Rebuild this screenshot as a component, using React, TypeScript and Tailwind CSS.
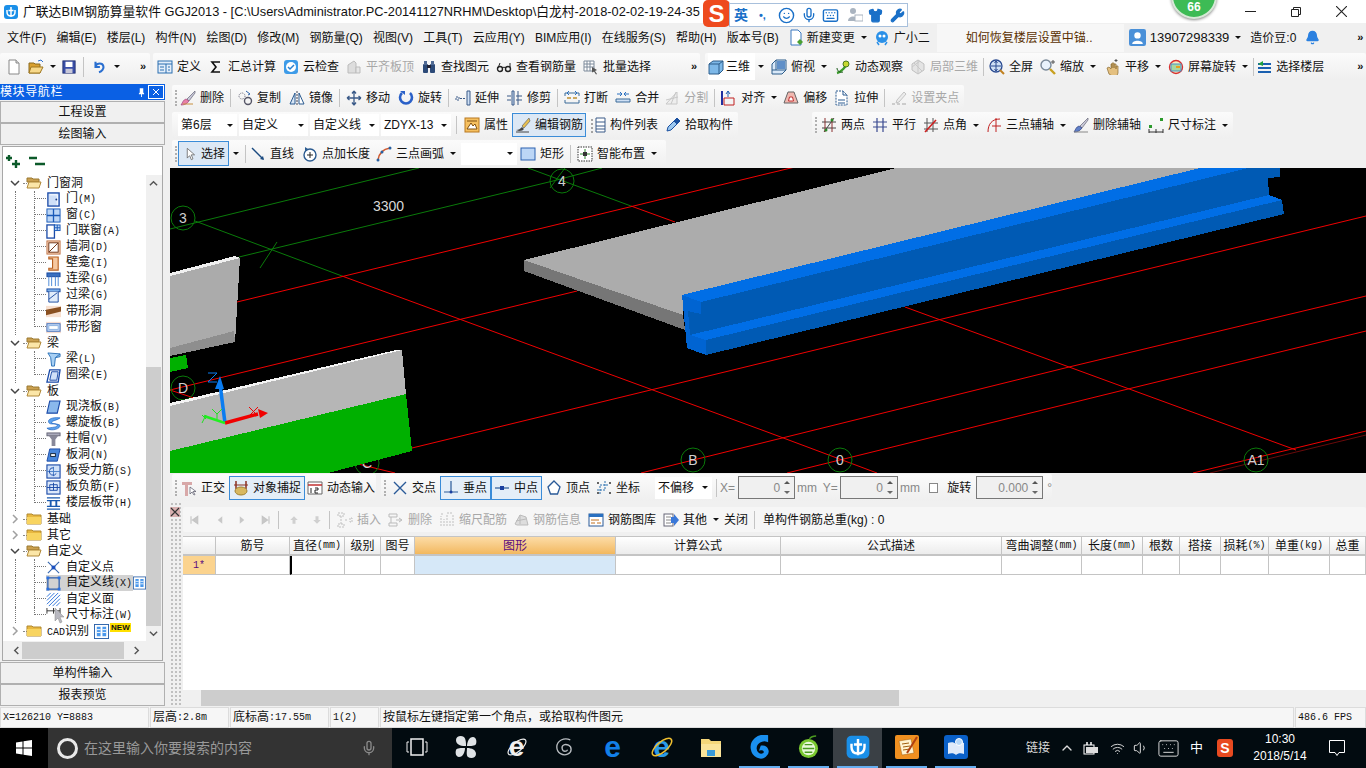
import type { ReactNode } from "react";
import { Bell, ChevronUp, Keyboard, Mic, Shirt, Smile, Volume1, Wifi, Wrench } from "lucide-react";
import clsx from "clsx";

const I: Record<string, ReactNode> = {
  logo: <><rect x="1" y="1" width="14" height="14" rx="3" fill="#1a8fe8" /><path d="M8 3v10M4 6v2c0 3 1.500 4 4 4s4-1 4-4V6M5.500 6.500h5" stroke="#fff" strokeWidth="1.500" fill="none" /></>,
  new: <><path d="M3 1h7l3 3v11H3z" fill="#fff" stroke="#888" /><path d="M10 1v3h3" fill="#ddd" stroke="#888" /></>,
  open: <><path d="M1 4h5l1 1h5v9H1z" fill="#d8a030" stroke="#8a6a20" /><path d="M3 8h12l-3 6H1z" fill="#f6d88a" stroke="#a07820" /><path d="M10 2l3-1 2 2" stroke="#2a6fd0" fill="none" /></>,
  save: <><rect x="1" y="1" width="14" height="14" fill="#3a4fa8" stroke="#223070" /><rect x="4" y="2" width="8" height="6" fill="#fff" /><rect x="4" y="10" width="8" height="5" fill="#c8c8d8" /></>,
  undo: <path d="M4 2v6h5M4 7c2-4 8-4 9 0 1 3-2 6-5 7" stroke="#2a6fd0" strokeWidth="2.400" fill="none" />,
  define: <><rect x="1" y="2" width="14" height="12" fill="#e4eefa" stroke="#2a6fb0" /><path d="M1 5h14M9 5v9M3 8h4M3 11h4M11 8h2M11 11h2" stroke="#2a6fb0" /></>,
  sigma: <path d="M12 3H4l4 5-4 5h8" stroke="#111" strokeWidth="1.600" fill="none" />,
  cloud: <><rect x="1" y="1" width="14" height="14" rx="3" fill="#3d9be8" /><circle cx="8" cy="8" r="5" fill="#fff" /><path d="M5 8l2 2 4-4" stroke="#2a80d0" strokeWidth="1.500" fill="none" /></>,
  flat: <><path d="M2 14V6l6-4 2 2v10z" fill="#ddd" stroke="#bbb" /><path d="M10 8h4v6h-4z" fill="#e6e6e6" stroke="#bbb" /></>,
  binoc: <><rect x="2" y="5" width="5" height="9" rx="1" fill="#2c4a78" /><rect x="9" y="5" width="5" height="9" rx="1" fill="#2c4a78" /><rect x="3" y="2" width="3" height="4" fill="#506a94" /><rect x="10" y="2" width="3" height="4" fill="#506a94" /><rect x="6" y="6" width="4" height="3" fill="#223" /></>,
  glasses: <><circle cx="4" cy="10" r="2.500" fill="none" stroke="#222" strokeWidth="1.400" /><circle cx="12" cy="10" r="2.500" fill="none" stroke="#222" strokeWidth="1.400" /><path d="M6 9c1-1 3-1 4 0M2 9l2-5M14 8V4" stroke="#222" fill="none" /></>,
  batch: <><path d="M1 2h10v10H1zM1 5h10M1 8h10M4 2v10M7 2v10" stroke="#7d8a9a" fill="#fff" /><path d="M9 8l5 3-2 1 2 3-1 .5-2-3-2 1z" fill="#555" /></>,
  cube: <><path d="M1 5l4-3h10v9l-4 4H1z" fill="#7db8e8" stroke="#2c5d8a" /><path d="M1 5h10v10M11 5l4-3" stroke="#2c5d8a" fill="none" /></>,
  cubeTop: <><path d="M1 5l4-4h10v10l-4 4H1z" fill="#d8e8f8" stroke="#2c5d8a" /><path d="M5 1v10H1M5 11h10M5 1l-4 4" stroke="#2c5d8a" fill="none" /><path d="M6 2h8v8H6z" fill="#5f8fc8" /></>,
  orbit: <><path d="M2 14c4-1 9-6 11-11" stroke="#3a9a2a" strokeWidth="2.400" fill="none" /><circle cx="11" cy="5" r="3" fill="#c8d830" stroke="#4a7a20" /><path d="M2 9c0 3 3 5 6 4" stroke="#1a5a1a" fill="none" /></>,
  cubeGray: <><path d="M8 1l6 4v6l-6 4-6-4V5z" fill="#e4e4e4" stroke="#c0c0c0" /><path d="M4 4l8 8M8 1v14M2 8l8-6" stroke="#c8c8c8" /></>,
  full: <><circle cx="7" cy="7" r="6" fill="#cfe0f5" stroke="#2a4a90" strokeWidth="1.300" /><path d="M7 2v10M2 7h10M7 2L5.500 4M7 2l1.500 2M7 12l-1.500-2M7 12l1.500-2" stroke="#2a4a90" fill="none" /><path d="M11 11l4 4" stroke="#c08020" strokeWidth="2" /></>,
  mag: <><circle cx="6" cy="6" r="5" fill="#e8f2fc" stroke="#7a8a9a" strokeWidth="1.400" /><path d="M10 10l5 5" stroke="#c8a020" strokeWidth="2.400" /><path d="M13 1v4M11 3h4" stroke="#555" /></>,
  hand: <><path d="M4 15L2 9l2-1 2 2V5h1v4-5h2v5-4h2v5-3h2v7l-2 5z" fill="#e4c080" stroke="#8a6a30" strokeWidth=".7" /><path d="M11 0v3M9.500 1.500h3" stroke="#555" /></>,
  spin: <><circle cx="8" cy="8" r="6.500" fill="#f8f0c0" stroke="#d83030" strokeWidth="1.400" /><rect x="3" y="5" width="10" height="7" fill="#a8d8a0" stroke="#4a90c8" /><path d="M8 8h4" stroke="#e8a020" strokeWidth="2" /></>,
  floors: <><path d="M2 5h13M2 9h13M2 13h13" stroke="#1a60b0" strokeWidth="1.800" /><path d="M7 2L2 5l5 2z" fill="#20a040" /></>,
  brush: <><path d="M15 1L7 9l2 2 6-8z" fill="#c8c8d8" stroke="#667" strokeWidth=".7" /><path d="M6 9c-3 1-3 3-5 6 3 0 6-1 8-4z" fill="#e880a8" stroke="#a04880" strokeWidth=".7" /><path d="M3 14h10" stroke="#c89040" /></>,
  copy: <><circle cx="5" cy="6" r="3" fill="none" stroke="#667" strokeDasharray="1 1" /><circle cx="11" cy="11" r="3.500" fill="none" stroke="#556" strokeWidth="1.400" /><path d="M9 1l4 3-2 1" stroke="#2a60a8" fill="none" /></>,
  mirror: <><path d="M8 1v14" stroke="#445" strokeDasharray="2 1" /><path d="M6 3v11H1z" fill="#d8e6f6" stroke="#2a5a90" /><path d="M10 3v11h5z" fill="#fff" stroke="#2a5a90" /></>,
  move: <path d="M8 1v14M1 8h14M8 1L6 3.500M8 1l2 2.500M8 15l-2-2.500M8 15l2-2.500M1 8l2.500-2M1 8l2.500 2M15 8l-2.500-2M15 8l-2.500 2" stroke="#3a5a88" strokeWidth="1.300" fill="none" />,
  rotate: <><path d="M4 3a6 6 0 1 0 8 0" stroke="#2a60c8" strokeWidth="2.600" fill="none" /><path d="M2 1h5v4z" fill="#2a60c8" /></>,
  extend: <><path d="M1 7h3v3H1zM5 8.500h5" stroke="#3a5a88" fill="none" strokeDasharray="2 1" /><path d="M12 1h3v14h-3z" fill="#cfe0f5" stroke="#3a5a88" /></>,
  trim: <><path d="M5 1h2v14H5z" fill="#cfe0f5" stroke="#3a5a88" /><path d="M0 6h4M0 10h4M9 6h6M9 10h6M11 1v14" stroke="#3a5a88" fill="none" /></>,
  break: <><path d="M1 6V3h14v3M1 10v3h14v-3" stroke="#3a6a98" fill="none" /><path d="M7 8H3M9 8h4" stroke="#c09030" strokeWidth="1.400" /><path d="M5 1l-2 2 2 2M11 1l2 2-2 2" stroke="#2a70c0" fill="none" /></>,
  merge: <><path d="M1 12V9h14v3z" fill="#cfe0f5" stroke="#3a6a98" /><path d="M2 4h4M14 4h-4M5 2l2 2-2 2M11 2L9 4l2 2" stroke="#2a70c0" fill="none" /></>,
  split: <><path d="M2 14L13 2v12z" fill="#eee" stroke="#c8c8c8" /><path d="M2 10l12-3M7 14l5-12" stroke="#c8c8c8" /></>,
  align: <><path d="M1 1v14" stroke="#2030a0" strokeWidth="2" /><path d="M3 8h10v7H3z" fill="none" stroke="#c02020" /><path d="M7 1v6M5 4l2-3 2 3" stroke="#2060b0" fill="none" /></>,
  offset: <><path d="M5 2h6l4 11H1z" fill="#f0b8b0" stroke="#666" /><path d="M6.500 7h3l1 4h-5z" fill="#fff" stroke="#c03030" /></>,
  stretch: <><path d="M2 1h7l4 4v10H2z" fill="#fff" stroke="#2a5a90" strokeDasharray="2 1" /><path d="M9 1v4h4M4 10h7M4 13h7" stroke="#2a5a90" fill="none" /></>,
  grip: <><path d="M1 14h3M6 14h3M11 14h4" stroke="#c0c0c0" strokeWidth="1.500" /><path d="M13 2L6 10l-1 3 3-1 7-8z" fill="#ececec" stroke="#c4c4c4" /></>,
  prop: <><rect x="1" y="1" width="14" height="14" fill="#f6c060" stroke="#b87820" /><path d="M3 12l4-6 2 3 2-2 2 5zM3 4h10" stroke="#805010" fill="#fff" /></>,
  edit: <><path d="M14 1L7 9l2 2 6-7z" fill="#e8c050" stroke="#666" strokeWidth=".7" /><path d="M1 13c3 0 4-1 6-3l2 2c-1 1-2 2-5 2z" fill="#444" /><path d="M1 15h13" stroke="#444" /></>,
  list: <><path d="M1 3h2M1 7h2M1 11h2M1 15h2" stroke="#555" /><path d="M6 1h9v14H6z" fill="#fff" stroke="#3a5a88" /><path d="M6 5h9M6 9h9M6 12h9" stroke="#3a5a88" /></>,
  pick: <><path d="M2 14l1-4 6-6 3 3-6 6z" fill="#9cc8f0" stroke="#1a50a0" /><path d="M9 4l3-3 3 3-3 3" fill="#1a50a0" stroke="#1a50a0" /></>,
  two: <><path d="M3 15L13 1M1 5h14M1 11h14" stroke="#444" /><path d="M4 1v14M11 1v14" stroke="#8a3030" /><circle cx="5" cy="13" r="1.500" fill="#2a8a2a" /><circle cx="11" cy="3" r="1.500" fill="#2a8a2a" /></>,
  para: <path d="M5 1v14M11 1v14M1 5h14M1 10h14" stroke="#3a4a90" strokeWidth="1.200" />,
  angle: <><path d="M4 1v14M10 1v14M1 6h14M1 12h14" stroke="#555" /><path d="M2 15L13 3" stroke="#d02020" strokeWidth="1.600" /></>,
  arc3: <path d="M2 15C2 7 6 2 14 2M10 1v14M6 9h9" stroke="#c02020" fill="none" />,
  delAux: <><path d="M15 1L7 9l2 2 6-8z" fill="#c8c8d8" stroke="#667" strokeWidth=".7" /><path d="M6 9c-3 1-3 3-5 6 3 0 6-1 8-4z" fill="#6080c8" stroke="#304080" strokeWidth=".7" /><path d="M1 15h14" stroke="#888" /></>,
  dim: <><path d="M1 15h14M1 12v4M15 12v4M8 12v4" stroke="#333" /><rect x="1" y="8" width="3" height="3" fill="#2a9a2a" /><rect x="12" y="1" width="3" height="3" fill="#2a9a2a" /></>,
  cursor: <path d="M4 1v12l3-3 2 5 2-1-2-5h4z" fill="#fff" stroke="#666" />,
  line: <><path d="M2 2l11 11" stroke="#1a4a80" strokeWidth="1.400" /><path d="M14 14l-1-4-3 3z" fill="#1a4a80" /></>,
  plen: <><circle cx="8" cy="9" r="6" fill="#fff" stroke="#2a5a90" strokeWidth="1.400" /><path d="M8 6v6M5 9h6" stroke="#222" /><path d="M3 1l3 2-3 2z" fill="#2a5a90" /></>,
  arc: <><path d="M2 14C3 7 7 3 14 2" stroke="#d05a30" strokeWidth="1.600" fill="none" /><circle cx="2" cy="14" r="1.500" fill="#2a60a0" /><circle cx="14" cy="2" r="1.500" fill="#2a60a0" /><circle cx="6" cy="6" r="1.500" fill="#2a60a0" /></>,
  rect: <rect x="1" y="2" width="14" height="12" fill="#bcd6f6" stroke="#2a60b0" />,
  smart: <><rect x="1" y="1" width="14" height="14" fill="#fff" stroke="#333" strokeDasharray="1.500 1" /><path d="M8 3v10M3 8h10" stroke="#2a8a2a" /><rect x="6" y="6" width="4" height="4" fill="#333" /></>,
  ortho: <><path d="M1 2h10v3H7v11H4V5H1z" fill="#d8a8a8" /><path d="M9 7v7l2-2 2 3 1-.5-2-3h3z" fill="#fff" stroke="#556" strokeWidth=".7" /></>,
  snap: <><path d="M3 1v8M13 1v8" stroke="#8a3020" strokeWidth="1.500" /><path d="M1 5h14" stroke="#8a3020" /><ellipse cx="8" cy="11" rx="6" ry="4" fill="#d8b860" stroke="#a08030" /></>,
  dyn: <><path d="M1 2h14v12H1z" fill="#fff" stroke="#666" /><path d="M1 5h14" stroke="#c03030" strokeWidth="1.500" /><path d="M4 8v5M8 8h3v2H8v3h3" stroke="#222" fill="none" /></>,
  cross: <path d="M2 2l12 12M14 2L2 14" stroke="#2a5a98" strokeWidth="1.400" />,
  perp: <><path d="M1 12h14M8 1v11" stroke="#2a5a98" strokeWidth="1.200" /><circle cx="8" cy="12" r="1.500" fill="#1a40a0" /></>,
  mid: <><path d="M1 8h14" stroke="#2a5a98" strokeWidth="1.200" /><rect x="6" y="6" width="4" height="4" fill="#1a40a0" /></>,
  vertex: <path d="M8 1l6 6-2.500 7h-7L2 7z" fill="#fff" stroke="#2a5a98" strokeWidth="1.300" />,
  coord: <><path d="M4 14V5h9M9 1v9H1" stroke="#2a70b0" fill="none" strokeDasharray="2 1" /><circle cx="2" cy="3" r="1" fill="#333" /><circle cx="14" cy="3" r="1" fill="#333" /><circle cx="2" cy="13" r="1" fill="#333" /><circle cx="14" cy="13" r="1" fill="#333" /></>,
  first: <path d="M4 3v10M13 3v10L6 8z" stroke="#c4c4c4" fill="#c8c8c8" strokeWidth="1.500" />,
  prev: <path d="M11 3v10L5 8z" fill="#c8c8c8" />,
  next: <path d="M5 3v10l6-5z" fill="#c8c8c8" />,
  last: <path d="M12 3v10M3 3v10l7-5z" stroke="#c4c4c4" fill="#c8c8c8" strokeWidth="1.500" />,
  up: <path d="M8 3l5 5h-3v5H6V8H3z" fill="#d0d0d0" />,
  down: <path d="M8 13l5-5h-3V3H6v5H3z" fill="#d0d0d0" />,
  ins: <path d="M1 1h6v3H1zM1 12h6v3H1zM4 4v8M8 8h3M13 6v4h2V6z" stroke="#c0c0c0" fill="none" strokeDasharray="2 1" />,
  del: <path d="M1 2h8v3H1zM1 11h8v3H1zM3 5v6M8 8h5M11 6l3 2-3 2" stroke="#bbb" fill="none" />,
  scale: <path d="M2 14V4M5 14V7M8 14V3M11 14V8M14 14V2M2 2h3M8 1h6" stroke="#c0c0c0" strokeDasharray="2 1" />,
  info: <><path d="M2 12l5-9 6 2 2 8H4z" fill="#ddd" stroke="#bbb" /><path d="M7 3v9M3 9l10-2" stroke="#bbb" /></>,
  lib: <><rect x="1" y="2" width="14" height="12" fill="#fff" stroke="#2a5a98" /><rect x="1" y="2" width="14" height="3" fill="#2a70c0" /><path d="M3 8h8M3 11h4M9 11h4" stroke="#c07020" /></>,
  other: <><rect x="1" y="2" width="9" height="12" fill="#fff" stroke="#667" /><path d="M3 5h5M3 8h5M3 11h5" stroke="#888" /><path d="M8 5h3V2l5 6-5 6v-3H8z" fill="#3a78d8" /></>,
  door: <><rect x="2" y="1" width="12" height="14" fill="#cfe0f8" stroke="#1a4aa8" strokeWidth="1.400" /><path d="M4 3h8v11" fill="none" stroke="#fff" /><circle cx="11" cy="8" r="1" fill="#1a3a80" /></>,
  win: <><rect x="1" y="1" width="14" height="14" fill="#bcd6f6" stroke="#1a5ab8" /><path d="M8 1v14M1 8h14" stroke="#1a5ab8" strokeWidth="1.400" /></>,
  doorwin: <><rect x="1" y="1" width="8" height="14" fill="#fff" stroke="#1a4aa8" strokeWidth="1.400" /><rect x="9" y="1" width="6" height="6" fill="#bcd6f6" stroke="#1a5ab8" /><path d="M12 1v6M9 4h6" stroke="#1a5ab8" /></>,
  hole: <><rect x="1" y="1" width="14" height="14" fill="#f6d8c0" stroke="#c07040" /><rect x="3" y="3" width="10" height="10" fill="#fff" stroke="#703010" /><path d="M3 13L13 3" stroke="#703010" /></>,
  niche: <path d="M3 1h10v14H3v-2h4V3H3z" fill="#f6c8a0" stroke="#b86020" strokeWidth="1.200" />,
  link: <><rect x="1" y="1" width="14" height="4" fill="#3a70c0" stroke="#1a4aa0" /><path d="M3 5v10M6 5v10M10 5v10M13 5v10" stroke="#4a88d8" /></>,
  lintel: <><rect x="1" y="1" width="14" height="3" fill="#7ab0ec" stroke="#1a4aa0" /><path d="M3 4v11h10V4" fill="#e0ecfa" stroke="#1a4aa0" /><path d="M3 12l9-7" stroke="#1a4aa0" /></>,
  bhole: <><rect x="0" y="2" width="16" height="12" fill="#f8e0d0" /><path d="M0 6l16-3v5L0 12z" fill="#8a5020" /></>,
  bwin: <><rect x="0" y="2" width="16" height="12" fill="#f6dcd0" /><rect x="1" y="4" width="14" height="8" fill="#d0e0f8" stroke="#3a70c0" /><rect x="3" y="6" width="10" height="4" fill="#fff" stroke="#8ab0e0" /></>,
  beam: <><path d="M2 1l13 1v3l-5 1-1 9H6L5 6z" fill="#a8d0f4" stroke="#2a70b8" /><path d="M10 6l5-4" stroke="#2a70b8" /></>,
  ring: <><path d="M4 2h11l-2 13H1z" fill="#fff" stroke="#1a4aa8" strokeWidth="1.400" /><path d="M6 4h7l-1.500 9H4z" fill="#d0e0f8" stroke="#1a4aa8" /></>,
  cast: <path d="M4 1h11l-3 13H1z" fill="#8ab8ec" stroke="#1a4aa8" strokeWidth="1.200" />,
  spiral: <path d="M15 2C8 1 1 3 3 7c1 3 9 0 9 3 0 2-5 2-11 3 3 3 12 2 14-2 1-3-8-2-9-4 0-2 5-2 9-5z" fill="#5aa0ec" stroke="#1a60c0" strokeWidth=".7" />,
  capital: <><rect x="1" y="1" width="14" height="3" fill="#aab" stroke="#667" /><path d="M3 4h10l-3 4H6zM6 8h4v7H6z" fill="#889" /></>,
  shole: <><path d="M4 1h11l-3 13H1z" fill="#4a88dc" stroke="#1a4aa8" /><rect x="5" y="6" width="5" height="3" fill="#fff" stroke="#123" /></>,
  srebar: <><rect x="1" y="1" width="14" height="14" fill="#cfe0f8" stroke="#1a4aa8" strokeWidth="1.200" /><path d="M1 8h14M8 3v10" stroke="#4a80c8" /><path d="M8 4a4 4 0 1 0 3 6" stroke="#1a4aa8" fill="none" /></>,
  nrebar: <><rect x="1" y="1" width="14" height="14" fill="#dce8fa" stroke="#1a4aa8" strokeWidth="1.200" /><path d="M1 8h14M8 3v8M4 5h8v6H4z" stroke="#1a4aa8" fill="none" /></>,
  band: <><path d="M1 2h14M1 14h14M1 5h14M1 11h14" stroke="#1a5ab0" strokeWidth="1.300" /><path d="M5 5v6M11 5v6" stroke="#1a5ab0" strokeWidth="2" /></>,
  cp: <><path d="M2 2l12 12M14 2L2 14" stroke="#3a6ab0" strokeWidth="1.200" /><rect x="6" y="6" width="4" height="4" fill="#1a50c0" /></>,
  cl: <><rect x="2" y="2" width="12" height="12" fill="none" stroke="#1a50a8" strokeWidth="1.200" /><rect x="0.500" y="0.500" width="3" height="3" fill="#2a70e0" /><rect x="12.500" y="0.500" width="3" height="3" fill="#2a70e0" /><rect x="0.500" y="12.500" width="3" height="3" fill="#2a70e0" /><rect x="12.500" y="12.500" width="3" height="3" fill="#2a70e0" /></>,
  cf: <path d="M1 5l4-4M1 9l8-8M1 13L13 1M3 15L15 3M7 15l8-8M11 15l4-4" stroke="#2a70d8" />,
  cd: <><path d="M1 3h14M1 0v6M8 0v6M15 0v6" stroke="#333" /></>,
  fopen: <><path d="M1 3h5l1 1h6v3H1z" fill="#caa050" stroke="#9a7830" /><path d="M3 7h12l-2 6H1z" fill="#fbe6a8" stroke="#b08838" /></>,
  fclosed: <><path d="M1 3h5l1 1h8v9H1z" fill="#e8b840" stroke="#b08830" /><path d="M1 6h14v7H1z" fill="#f8d460" /></>,
  bars: <><rect x="0.500" y="0.500" width="15" height="15" fill="#fff" stroke="#2a60a8" /><path d="M3 3h4v10H3zM9 3h4v10H9z" fill="#4a98ec" /><path d="M3 6h4M3 9h4M9 6h4M9 9h4" stroke="#fff" /></>,
};

const Icon = ({ n, className }: { n: string; className?: string }) => (
  <svg viewBox="0 0 16 16" className={clsx("shrink-0", className ?? "w-[16px] h-[16px]")}>
    {I[n]}
  </svg>
);

const Caret = ({ className }: { className?: string }) => (
  <svg viewBox="0 0 6 3" className={clsx("w-[6px] h-[3px] shrink-0", className)}>
    <path d="M0 0h6L3 3z" fill="#111" />
  </svg>
);

const Sep = () => <span className="w-px h-[18px] bg-[#c4c4c4] mx-[-2px] shrink-0" />;

const Grip = () => (
  <span className="w-[2px] h-[16px] shrink-0 border-l-2 border-dotted border-[#b0b0b0]" />
);

type ToolProps = { i?: string; t: string; gray?: boolean; caret?: boolean; className?: string };

const Tool = ({ i, t, gray, caret, className }: ToolProps) => (
  <div className={clsx("flex items-center gap-[4px] shrink-0 whitespace-nowrap", gray ? "text-[#a8a8a8]" : "text-[#111]", className)}>
    {i && <Icon n={i} />}
    <span>{t}</span>
    {caret && <Caret className="ml-[2px]" />}
  </div>
);

const Seg = ({ className, children }: { className?: string; children: ReactNode }) => (
  <div className={clsx("flex items-center rounded-[2px] bg-linear-to-b from-[#fbfbfb] to-[#efefef] shrink-0", className)}>
    {children}
  </div>
);

const Drop = ({ t, className }: { t: string; className: string }) => (
  <div className={clsx("flex items-center justify-between h-[22px] bg-white pl-[3px] pr-[4px] shrink-0 overflow-hidden whitespace-nowrap", className)}>
    <span>{t}</span>
    <Caret />
  </div>
);

const Num = ({ v, className }: { v: string; className: string }) => (
  <div className={clsx("flex items-center justify-end h-[23px] border border-[#777] bg-[#f0f0f0] text-[#888] shrink-0", className)}>
    <span>{v}</span>
    <div className="flex flex-col gap-[7px] mx-[4px]">
      <svg viewBox="0 0 6 3" className="w-[6px] h-[3px]"><path d="M3 0l3 3H0z" fill="#555" /></svg>
      <Caret className="opacity-60" />
    </div>
  </div>
);

// tree and status text: half width latin next to full width hanzi
const Mix = ({ s }: { s: string }) => (
  <>
    {s.split(/([\x00-\x7f]+)/).map((p, k) =>
      /[\x00-\x7f]/.test(p) ? (
        <span key={k} className="font-['Liberation_Mono',monospace] text-[10px]">{p}</span>
      ) : (
        <span key={k} className="text-[12px]">{p}</span>
      ),
    )}
  </>
);

type Row = { t: string; i: string; level: 0 | 1; open?: boolean; last?: boolean; sel?: boolean; extra?: ReactNode };

const tree: Row[] = [
  { t: "门窗洞", i: "fopen", level: 0, open: true },
  { t: "门(M)", i: "door", level: 1 },
  { t: "窗(C)", i: "win", level: 1 },
  { t: "门联窗(A)", i: "doorwin", level: 1 },
  { t: "墙洞(D)", i: "hole", level: 1 },
  { t: "壁龛(I)", i: "niche", level: 1 },
  { t: "连梁(G)", i: "link", level: 1 },
  { t: "过梁(G)", i: "lintel", level: 1 },
  { t: "带形洞", i: "bhole", level: 1 },
  { t: "带形窗", i: "bwin", level: 1, last: true },
  { t: "梁", i: "fopen", level: 0, open: true },
  { t: "梁(L)", i: "beam", level: 1 },
  { t: "圈梁(E)", i: "ring", level: 1, last: true },
  { t: "板", i: "fopen", level: 0, open: true },
  { t: "现浇板(B)", i: "cast", level: 1 },
  { t: "螺旋板(B)", i: "spiral", level: 1 },
  { t: "柱帽(V)", i: "capital", level: 1 },
  { t: "板洞(N)", i: "shole", level: 1 },
  { t: "板受力筋(S)", i: "srebar", level: 1 },
  { t: "板负筋(F)", i: "nrebar", level: 1 },
  { t: "楼层板带(H)", i: "band", level: 1, last: true },
  { t: "基础", i: "fclosed", level: 0 },
  { t: "其它", i: "fclosed", level: 0 },
  { t: "自定义", i: "fopen", level: 0, open: true },
  { t: "自定义点", i: "cp", level: 1 },
  { t: "自定义线(X)", i: "cl", level: 1, sel: true, extra: <Icon n="bars" className="w-[13px] h-[14px]" /> },
  { t: "自定义面", i: "cf", level: 1 },
  { t: "尺寸标注(W)", i: "cd", level: 1, last: true },
  {
    t: "CAD识别",
    i: "fclosed",
    level: 0,
    extra: (
      <>
        <Icon n="bars" className="w-[15px] h-[15px] ml-[5px]" />
        <span className="self-start bg-[#ffe000] text-[#111] font-bold text-[8px] leading-[9px] px-[1px] ml-[1px] font-['Liberation_Sans',sans-serif]">NEW</span>
      </>
    ),
  },
];

const TreeRow = ({ r }: { r: Row }) =>
  r.level === 0 ? (
    <div className="flex items-center h-[16px]">
      <svg viewBox="0 0 10 10" className="w-[10px] h-[10px] ml-[7px]">
        {r.open ? <path d="M1 3l4 4 4-4" stroke="#444" strokeWidth="1.500" fill="none" /> : <path d="M3 1l4 4-4 4" stroke="#a0a0a0" strokeWidth="1.500" fill="none" />}
      </svg>
      <span className="w-[6px] ml-[3px] mr-[-3px] border-t border-dotted border-[#888]" />
      <Icon n={r.i} />
      <span className="ml-[5px]"><Mix s={r.t} /></span>
      {r.extra}
    </div>
  ) : (
    <div className="flex h-[16px] whitespace-nowrap">
      <span className="w-[12px] shrink-0" />
      <span className="w-[19px] shrink-0 border-l border-dotted border-[#777]" />
      <span className={clsx("w-[12px] shrink-0", !r.last && "border-l border-dotted border-[#777]")}>
        <span className={clsx("block h-[8px] border-b border-dotted border-[#777]", r.last && "border-l")} />
      </span>
      <div className="flex items-center">
        <div className={clsx("flex items-center h-[16px]", r.sel && "bg-[#d2d2d2]")}>
          <Icon n={r.i} className="w-[15px] h-[15px] mr-[-3px]" />
          <span className="pl-[8px] pr-[1px] leading-[16px]"><Mix s={r.t} /></span>
        </div>
        {r.extra}
      </div>
    </div>
  );

const Sidebar = () => (
  <aside className="w-[165px] shrink-0 flex flex-col">
    <div className="h-[16px] bg-[#0a60e4] text-white flex items-center justify-between text-[12px] tracking-[0.6px]">
      <span>模块导航栏</span>
      <div className="flex items-center gap-[3px] pr-[1px]">
        <svg viewBox="0 0 8 10" className="w-[7px] h-[9px]"><path d="M2 0h4v5l1 1v1H4.500v3h-1V7H1V6l1-1z" fill="#fff" /></svg>
        <span className="w-[16px] h-[14px] border border-white flex items-center justify-center">
          <svg viewBox="0 0 8 8" className="w-[8px] h-[8px]"><path d="M1 1l6 6M7 1L1 7" stroke="#fff" /></svg>
        </span>
      </div>
    </div>
    <button className="h-[22px] mt-[1px] border border-[#b0b0b0] bg-[#f0f0f0] text-[12px] text-[#111]">工程设置</button>
    <button className="h-[22px] border border-[#b0b0b0] bg-[#f0f0f0] text-[12px] text-[#111]">绘图输入</button>
    <div className="flex-1 flex flex-col min-h-0 mx-[2px] mt-[1px] border border-[#a8a8a8] bg-[#f0f0f0]">
      <div className="h-[28px] bg-white flex items-center gap-[5px] pl-[3px] shrink-0">
        <svg viewBox="0 0 18 14" className="w-[18px] h-[14px]"><path d="M3 1v6M0 4h6M10 6v8M6 10h8" stroke="#0c5a2a" strokeWidth="2.400" /></svg>
        <svg viewBox="0 0 18 14" className="w-[18px] h-[14px]"><path d="M0 4h8M6 10h10" stroke="#0c5a2a" strokeWidth="2.400" /></svg>
      </div>
      <div className="flex min-h-[466px]">
        <div className="w-[143px] bg-white overflow-hidden text-[#111] relative">
          {tree.map((r) => <TreeRow key={r.t} r={r} />)}
          <svg viewBox="0 0 16 16" className="absolute left-[49px] top-[433px] w-[16px] h-[16px]"><path d="M3 0v13l3-3 2 5 2-1-2-5h4z" fill="#b8b8c0" stroke="#888" strokeWidth=".5" /></svg>
        </div>
        <div className="w-[15px] bg-[#f0f0f0] flex flex-col items-center">
          <svg viewBox="0 0 10 10" className="w-[9px] h-[9px] mt-[4px]"><path d="M1 7l4-4 4 4" stroke="#555" strokeWidth="1.600" fill="none" /></svg>
          <div className="w-full h-[179px] shrink-0" />
          <div className="w-full flex-1 bg-[#cdcdcd]" />
          <svg viewBox="0 0 10 10" className="w-[9px] h-[9px] my-[3px]"><path d="M1 3l4 4 4-4" stroke="#555" strokeWidth="1.600" fill="none" /></svg>
        </div>
      </div>
      <div className="h-[17px] mt-[1px] flex items-center w-[143px] pl-[9px]">
        <svg viewBox="0 0 10 10" className="w-[9px] h-[9px]"><path d="M7 1L3 5l4 4" stroke="#555" strokeWidth="1.600" fill="none" /></svg>
        <div className="w-[102px] h-full ml-[1px] bg-[#cdcdcd]" />
        <svg viewBox="0 0 10 10" className="w-[9px] h-[9px] ml-[8px]"><path d="M3 1l4 4-4 4" stroke="#555" strokeWidth="1.600" fill="none" /></svg>
      </div>
    </div>
    <button className="h-[22px] mt-[1px] border border-[#b0b0b0] bg-[#f0f0f0] text-[12px] text-[#111]">单构件输入</button>
    <button className="h-[22px] border border-[#b0b0b0] bg-[#f0f0f0] text-[12px] text-[#111]">报表预览</button>
  </aside>
);

const Axis = ({ cx, cy, t }: { cx: number; cy: number; t: string }) => (
  <>
    <circle cx={cx} cy={cy} r="12" fill="none" stroke="#0a7a0a" />
    <text x={cx} y={cy + 5} textAnchor="middle" fill="#d0d0d0" fontSize="14">{t}</text>
  </>
);

const Viewport = () => (
  <svg viewBox="0 0 1196 305" className="w-[1196px] h-[305px] bg-black block font-['Liberation_Sans',sans-serif]">
    <g fill="none" strokeWidth="1" stroke="#0a7a0a">
      <path d="M0 61L249 0M69 89L383 13L432 0M25 53L172 108M358 0L461 38" />
      <path d="M90 100l17-26M395 0l-15 20" />
    </g>
    <g fill="none" strokeWidth="1" stroke="#f00000">
      <path d="M67 134L600 5L726 -25" />
      <path d="M0 222L407 123" />
      <path d="M242 280L600 193L768 152L1196 48" />
      <path d="M471 305L600 273L899 199L1196 128" />
      <path d="M617 305L958 221L1196 163" />
      <path d="M1023 305L1196 263" />
      <path d="M172 108L600 265L707 305" />
      <path d="M461 38L505 54" />
      <path d="M735 139L1126 282" />
      <path d="M0 222L30 232M188 296L225 305" />
      <path d="M1040 305L1196 267" stroke="#6a0a0a" />
    </g>
    <Axis cx={13} cy={50} t="3" />
    <Axis cx={392} cy={13} t="4" />
    <Axis cx={13} cy={220} t="D" />
    <Axis cx={197} cy={295} t="C" />
    <Axis cx={523} cy={292} t="B" />
    <Axis cx={670} cy={292} t="0" />
    <Axis cx={1086} cy={292} t="A1" />
    <text x="203" y="43" fill="#d8d8d8" fontSize="14">3300</text>

    <g shapeRendering="crispEdges">
      {/* left walls */}
      <path d="M0 105L65 88L70 90L65 174L0 188z" fill="#ababab" />
      <path d="M0 105L65 88L70 90L0 108z" fill="#f0f0f0" />
      <path d="M0 180L64 163L65 174L0 188z" fill="#8e8e8e" />
      <path d="M0 190L16 187L18 200L0 204z" fill="#00b000" />
      <path d="M0 235L226 182L232 182L236 226L0 283z" fill="#b6b6b6" />
      <path d="M0 235L226 182L232 182L0 238z" fill="#f4f4f4" />
      <path d="M0 283L236 226L242 283L158 305L0 305z" fill="#00b000" />
      {/* slab */}
      <path d="M354 92L726 0L1030 0L513 127L513 147z" fill="#acacac" />
      <path d="M354 92L513 147L515 162L354 103z" fill="#767676" />
      {/* beam */}
      <path d="M516 130L532 134L534 170L518 170z" fill="#005ab4" />
      <path d="M512 127L1030 0L1078 0L531 134z" fill="#006ee6" />
      <path d="M531 134L1078 0L1110 0L1110 9L1098 10L1099 27L520 167z" fill="#005ab4" />
      <path d="M512 127L531 134L531 146L518 143L520 167L536 172L536 187L517 180z" fill="#0064d2" />
      <path d="M520 167L1099 27L1112 32L536 172z" fill="#006ee6" />
      <path d="M536 172L1112 32L1114 46L536 187z" fill="#005ab4" />
    </g>

    {/* ucs */}
    <path d="M55 255L50 216" stroke="#0a7cf0" strokeWidth="3.500" />
    <path d="M50 208l-5 13h9z" fill="#0a7cf0" />
    <path d="M55 255L88 246" stroke="#f00000" strokeWidth="3.500" />
    <path d="M98 245l-10-4 2 9z" fill="#f00000" />
    <path d="M55 255L34 248" stroke="#20f020" strokeWidth="2.500" />
    <g fill="none" strokeWidth="1">
      <path d="M38 205h9l-9 9h9" stroke="#0a7cf0" />
      <path d="M79 239l9 9M88 239l-9 9" stroke="#f00000" />
      <path d="M42 241l5 5 5-5M47 246v5M32 247l4 4M36 247l-4 8" stroke="#20e020" />
    </g>
  </svg>
);

const cols = ["", "筋号", "直径(mm)", "级别", "图号", "图形", "计算公式", "公式描述", "弯曲调整(mm)", "长度(mm)", "根数", "搭接", "损耗(%)", "单重(kg)", "总重"];

const Table = () => (
  <div className="grid grid-cols-[33px_74px_55px_36px_34px_201px_165px_221px_80px_61px_37px_41px_48px_61px_36px] grid-rows-[19px_19px] text-[#111]">
    {cols.map((c, k) => (
      <div
        key={k}
        className={clsx(
          "flex items-center justify-center whitespace-nowrap overflow-hidden border-r border-b-2 border-[#c4c4c4]",
          k === 5 ? "bg-linear-to-b from-[#fcdca6] to-[#f2b85e] text-[#5a0a80]" : "bg-linear-to-b from-[#ffffff] to-[#ececec]",
        )}
      >
        <Mix s={c} />
      </div>
    ))}
    {cols.map((_, k) => (
      <div
        key={k}
        className={clsx(
          "flex items-center justify-center border-r border-b border-[#c4c4c4]",
          k === 0 && "bg-[#fbd38e] text-[#5a0a80]",
          k === 2 && "border-l-2 border-l-black",
          k === 5 ? "bg-[#d6e8f8]" : k !== 0 && "bg-white",
        )}
      >
        {k === 0 && <Mix s="1*" />}
      </div>
    ))}
  </div>
);

const GridPanel = () => (
  <div className="h-[204px] flex shrink-0">
    <div className="w-[13px] shrink-0 pt-[5px] bg-[radial-gradient(#c0c0c0_1px,transparent_1px)] bg-[size:4px_4px]">
      <svg viewBox="0 0 10 10" className="w-[10px] h-[10px] bg-[#d8b0b0]"><path d="M1 1l8 8M9 1L1 9" stroke="#333" strokeWidth="1.200" /></svg>
    </div>
    <div className="flex-1 flex flex-col min-w-0">
      <Seg className="h-[25px] mt-[5px] gap-[8px] pl-[5px] bg-none bg-[#f6f6f6]">
        <Icon n="first" className="w-[12px] h-[14px]" />
        <Icon n="prev" className="w-[12px] h-[14px] ml-[6px]" />
        <Icon n="next" className="w-[12px] h-[14px] ml-[2px]" />
        <Icon n="last" className="w-[12px] h-[14px] ml-[4px]" />
        <Sep />
        <Icon n="up" className="w-[12px] h-[14px] ml-[3px]" />
        <Icon n="down" className="w-[12px] h-[14px] ml-[3px]" />
        <Sep />
        <Tool i="ins" t="插入" gray className="gap-[4px] ml-[1px]" />
        <Tool i="del" t="删除" gray className="ml-[-1px]" />
        <Tool i="scale" t="缩尺配筋" gray className="ml-[-1px]" />
        <Tool i="info" t="钢筋信息" gray className="ml-[-2px]" />
        <Tool i="lib" t="钢筋图库" className="ml-[-1px]" />
        <Tool i="other" t="其他" caret className="ml-[-1px]" />
        <Tool t="关闭" className="ml-[-3px]" />
        <Sep />
        <Tool t="单构件钢筋总重(kg) : 0" className="ml-[2px]" />
      </Seg>
      <div className="flex-1 mt-[4px] bg-white border-t border-[#c4c4c4] min-h-0">
        <Table />
      </div>
      <div className="h-[16px] flex items-stretch bg-[#f0f0f0] shrink-0">
        <div className="w-[18px] bg-[#f0f0f0]" />
        <div className="w-[698px] bg-[#cdcdcd]" />
      </div>
    </div>
  </div>
);

const Status = ({ className, children }: { className: string; children: ReactNode }) => (
  <div className={clsx("h-[21px] flex items-center pl-[2px] bg-[#f6f6f6] border border-[#dcdcdc] text-[#111] shrink-0 whitespace-nowrap overflow-hidden", className)}>
    {children}
  </div>
);

const TaskIcon = ({ children, under, active }: { children: ReactNode; under?: boolean; active?: boolean }) => (
  <div className={clsx("w-[49px] h-full flex flex-col shrink-0", active && "bg-[#3a4045]")}>
    <div className="flex-1 flex items-center justify-center">{children}</div>
    <div className={clsx("h-[2px] mx-[4px]", under && "bg-[#66aef0]")} />
  </div>
);

const Taskbar = () => (
  <div className="h-[40px] bg-[#020b10] flex items-stretch shrink-0 text-white">
    <div className="w-[48px] bg-black flex items-center justify-center shrink-0">
      <svg viewBox="0 0 16 16" className="w-[16px] h-[16px]"><path d="M0 2.500l6.500-1v6H0zM7.500 1.300L16 0v7.500H7.500zM0 8.500h6.500v6l-6.500-1zM7.500 8.500H16V16l-8.500-1.300z" fill="#fff" /></svg>
    </div>
    <div className="w-[344px] bg-[#333333] flex items-center pl-[9px] pr-[15px] shrink-0">
      <span className="w-[21px] h-[21px] rounded-full border-[3px] border-[#e8e8e8] shrink-0" />
      <span className="ml-[6px] text-[14px] text-[#999999] flex-1">在这里输入你要搜索的内容</span>
      <Mic size={16} color="#8a8a8a" />
    </div>
    <TaskIcon>
      <svg viewBox="0 0 22 18" className="w-[22px] h-[18px]"><rect x="5" y="1" width="12" height="16" fill="none" stroke="#eee" strokeWidth="1.500" /><path d="M3 4H1v10h2M19 4h2v10h-2" fill="none" stroke="#eee" /></svg>
    </TaskIcon>
    <TaskIcon>
      <svg viewBox="0 0 22 24" className="w-[22px] h-[24px]"><path d="M10 11C5 11 1 9 1 5s5-5 8-3c2 2 2 6 2 9zM12 11c0-4 2-9 6-9 3 0 4 4 3 7-1 2-5 2-9 2zM12 13c5 0 9 2 9 6s-5 5-8 3c-2-2-1-6-1-9zM10 13c0 4-2 9-6 9-3 0-4-4-3-7 1-2 5-2 9-2z" fill="#dfe3e6" /></svg>
    </TaskIcon>
    <TaskIcon>
      <span className="relative ml-[4px] text-[28px] leading-none font-bold font-['Liberation_Sans',sans-serif] text-[#f0f0f0]">
        e
        <svg viewBox="0 0 24 24" className="absolute left-[-3px] top-[3px] w-[22px] h-[22px]"><ellipse cx="12" cy="12" rx="12" ry="5" transform="rotate(-40 12 12)" fill="none" stroke="#f0f0f0" strokeWidth="1.300" /></svg>
      </span>
    </TaskIcon>
    <TaskIcon>
      <svg viewBox="0 0 20 22" className="w-[18px] h-[20px]"><path d="M17 3C10 0 2 4 2 11s7 10 12 8 5-8 1-10-8 0-7 4 5 3 6 1" fill="none" stroke="#b8bcc0" strokeWidth="1.500" /></svg>
    </TaskIcon>
    <TaskIcon>
      <span className="text-[30px] leading-none font-bold font-['Liberation_Sans',sans-serif] text-[#1280e8]">e</span>
    </TaskIcon>
    <TaskIcon>
      <span className="relative text-[30px] leading-none font-bold font-['Liberation_Sans',sans-serif] text-[#2a9ae8]">
        e
        <svg viewBox="0 0 24 24" className="absolute left-[-3px] top-[3px] w-[24px] h-[24px]"><ellipse cx="12" cy="12" rx="12" ry="5" transform="rotate(-40 12 12)" fill="none" stroke="#f0c030" strokeWidth="1.500" /></svg>
      </span>
    </TaskIcon>
    <TaskIcon>
      <svg viewBox="0 0 22 22" className="w-[22px] h-[22px]"><path d="M1 3h8l2 2h10v16H1z" fill="#f5d77a" /><rect x="1" y="8" width="20" height="13" fill="#fbe49a" /><rect x="7" y="14" width="8" height="6" fill="#3a9ad8" /></svg>
    </TaskIcon>
    <TaskIcon under>
      <svg viewBox="0 0 24 26" className="w-[23px] h-[25px]"><path d="M20 1c-9-2-18 5-16 14 1 7 9 11 14 7 5-4 2-11-4-10l-1 3c4-1 6 3 3 5-4 2-8-2-8-6 0-6 7-10 12-8z" fill="#1a90f0" stroke="#1a90f0" strokeWidth="2" /></svg>
    </TaskIcon>
    <TaskIcon under>
      <svg viewBox="0 0 22 26" className="w-[21px] h-[25px]"><circle cx="11" cy="14" r="10" fill="#7ac830" /><circle cx="11" cy="14" r="7" fill="#e8f8d8" /><path d="M5 14h12M7 10h8M7 18h8" stroke="#4a9a20" strokeWidth="1.500" /><path d="M12 4c2-3 5-3 7-3" stroke="#4a9a20" strokeWidth="1.500" fill="none" /></svg>
    </TaskIcon>
    <TaskIcon under active>
      <Icon n="logo" className="w-[26px] h-[26px]" />
    </TaskIcon>
    <TaskIcon under>
      <svg viewBox="0 0 24 24" className="w-[24px] h-[24px]"><rect width="24" height="24" rx="2" fill="#f09020" /><path d="M4 6l12-2 3 14-12 2z" fill="#fff3d0" stroke="#a06010" strokeWidth=".5" /><path d="M7 9l7-1M8 12l7-1M8 15l7-1" stroke="#a06010" /><path d="M22 2L12 18" stroke="#b04010" strokeWidth="2" /></svg>
    </TaskIcon>
    <TaskIcon under>
      <svg viewBox="0 0 24 24" className="w-[24px] h-[24px]"><rect width="24" height="24" rx="3" fill="#0a60c8" /><path d="M4 8c3-1 6-1 8 1 2-2 5-2 8-1v11c-3-1-6-1-8 1-2-2-5-2-8-1z" fill="#dfeafa" /><circle cx="15" cy="7" r="3.500" fill="#b8d8f8" stroke="#fff" /></svg>
    </TaskIcon>
    <div className="flex items-center ml-[46px] text-[12px] text-[#dcdcdc] shrink-0">
      <span className="w-[24px] whitespace-nowrap">链接</span>
      <ChevronUp size={16} className="ml-[9px]" />
      <svg viewBox="0 0 16 14" className="w-[16px] h-[14px] ml-[8px]"><path d="M4 1v3M8 1v3" stroke="#fff" strokeWidth="1.500" /><rect x="1" y="4" width="10" height="9" fill="none" stroke="#fff" /><rect x="3" y="6" width="12" height="6" fill="#ddd" /></svg>
      <Wifi size={15} className="ml-[11px]" strokeWidth={1.500} />
      <Volume1 size={16} className="ml-[8px]" strokeWidth={1.500} />
      <Keyboard size={23} className="ml-[8px]" strokeWidth={1} />
      <span className="ml-[10px] text-[13px] text-white">中</span>
      <span className="ml-[14px] w-[16px] h-[18px] rounded-[3px] bg-[#e84a20] text-white font-bold text-[14px] leading-[18px] text-center font-['Liberation_Sans',sans-serif]">S</span>
      <div className="ml-[17px] w-[60px] flex flex-col items-center text-[12px] leading-[17px] text-white font-['Liberation_Sans',sans-serif]">
        <span>10:30</span>
        <span className="whitespace-nowrap">2018/5/14</span>
      </div>
      <svg viewBox="0 0 16 17" className="w-[16px] h-[17px] ml-[19px]"><path d="M.5.5h15v12H10l-2 3-2-3H.5z" fill="none" stroke="#fff" /></svg>
    </div>
  </div>
);

export default function App() {
  return (
    <div className="relative w-[1366px] h-[768px] overflow-hidden flex flex-col bg-[#f0f0f0] text-[12px] text-[#111] whitespace-nowrap font-['Liberation_Sans','Noto_Sans_CJK_SC',sans-serif]">
      {/* title bar */}
      <div className="h-[23px] bg-white flex items-center pl-[3px] shrink-0">
        <Icon n="logo" />
        <span className="ml-[4px] text-[12.8px] whitespace-nowrap">广联达BIM钢筋算量软件 GGJ2013 - [C:\Users\Administrator.PC-20141127NRHM\Desktop\白龙村-2018-02-02-19-24-35</span>
        <div className="ml-auto flex items-center gap-[35px] pr-[19px]">
          <span className="w-[11px] h-px bg-[#222]" />
          <svg viewBox="0 0 10 10" className="w-[10px] h-[10px]"><path d="M.5 2.500h7v7h-7zM2.500 2.500v-2h7v7h-2" fill="none" stroke="#222" /></svg>
          <svg viewBox="0 0 10 10" className="w-[11px] h-[11px]"><path d="M0 0l10 10M10 0L0 10" stroke="#222" /></svg>
        </div>
      </div>

      {/* menu bar */}
      <div className="h-[29px] flex items-center pl-[7px] shrink-0 whitespace-nowrap">
        <div className="flex gap-[10.2px]">
          {["文件(F)", "编辑(E)", "楼层(L)", "构件(N)", "绘图(D)", "修改(M)", "钢筋量(Q)", "视图(V)", "工具(T)", "云应用(Y)", "BIM应用(I)", "在线服务(S)", "帮助(H)", "版本号(B)"].map((m) => (
            <span key={m}>{m}</span>
          ))}
        </div>
        <svg viewBox="0 0 16 18" className="w-[16px] h-[18px] ml-[9px]"><path d="M3 1h7l3 3v12H3z" fill="#fff" stroke="#3a78c0" /><path d="M9 13l3-3 3 3-3 3z" fill="#4aa030" /></svg>
        <span className="ml-[3px]">新建变更</span>
        <Caret className="ml-[6px]" />
        <svg viewBox="0 0 16 16" className="w-[16px] h-[16px] ml-[7px]"><circle cx="8" cy="7" r="6" fill="#2a90e8" /><circle cx="6" cy="6" r="1.500" fill="#fff" /><circle cx="10" cy="6" r="1.500" fill="#fff" /><path d="M3 12l2 3M13 12l-2 3" stroke="#2a90e8" strokeWidth="1.500" /></svg>
        <span className="ml-[4px]">广小二</span>
        <div className="ml-[7px] w-[187px] h-[28px] bg-[#f7f7f7] flex items-center pl-[29px] text-[#5a3000]">如何恢复楼层设置中锚..</div>
        <svg viewBox="0 0 16 16" className="w-[17px] h-[17px] ml-[5px]"><rect width="16" height="16" rx="2" fill="#4a90d8" /><circle cx="8" cy="6" r="3" fill="#fff" /><path d="M3 14c0-4 10-4 10 0z" fill="#fff" /></svg>
        <span className="ml-[4px] text-[13px]">13907298339</span>
        <Caret className="ml-[6px]" />
        <span className="ml-[9px]">造价豆:0</span>
        <Bell size={15} className="ml-[9px]" fill="#2a80e0" color="#2a80e0" />
        <span className="ml-[37px] text-[11px] font-bold leading-none">»</span>
      </div>

      {/* standard toolbar */}
      <div className="h-[32px] flex items-start pt-[1px] shrink-0">
        <Seg className="w-[150px] h-[27px] pl-[6px]">
          <Icon n="new" />
          <Icon n="open" className="w-[16px] h-[16px] ml-[6px]" />
          <Caret className="ml-[6px]" />
          <Icon n="save" className="w-[14px] h-[14px] ml-[6px]" />
          <span className="w-px h-[20px] bg-[#c4c4c4] ml-[7px]" />
          <Icon n="undo" className="w-[14px] h-[14px] ml-[8px]" />
          <Caret className="ml-[8px]" />
          <span className="ml-[20px] text-[11px] font-bold leading-none">»</span>
        </Seg>
        <Seg className="w-[547px] h-[27px] ml-[3px] pl-[4px] gap-[7px]">
          <Tool i="define" t="定义" />
          <Tool i="sigma" t="汇总计算" />
          <Tool i="cloud" t="云检查" />
          <Tool i="flat" t="平齐板顶" gray />
          <Tool i="binoc" t="查找图元" />
          <Tool i="glasses" t="查看钢筋量" />
          <Tool i="batch" t="批量选择" />
          <span className="ml-[33px] text-[11px] font-bold leading-none">»</span>
        </Seg>
        <Seg className="w-[661px] h-[27px] ml-[5px] pl-[3px] gap-[7px]">
          <div className="flex items-center gap-[2px] bg-white h-full pr-[5px]">
            <Icon n="cube" />
            <span>三维</span>
          </div>
          <Caret className="ml-[-4px]" />
          <Tool i="cubeTop" t="俯视" caret />
          <Tool i="orbit" t="动态观察" className="ml-[1px]" />
          <Tool i="cubeGray" t="局部三维" gray className="gap-[2px]" />
          <Sep />
          <Tool i="full" t="全屏" />
          <Tool i="mag" t="缩放" caret />
          <Tool i="hand" t="平移" caret className="ml-[2px] gap-[3px]" />
          <Tool i="spin" t="屏幕旋转" caret className="gap-[3px]" />
          <Sep />
          <Tool i="floors" t="选择楼层" className="gap-[2px] ml-[-3px]" />
          <span className="ml-[26px] text-[11px] font-bold leading-none">»</span>
        </Seg>
      </div>

      <div className="flex-1 flex min-h-0 gap-[5px]">
        <Sidebar />
        <main className="flex-1 min-w-0 flex flex-col">
          {/* edit toolbar */}
          <div className="h-[27px] flex items-center pl-[2px] shrink-0">
            <Seg className="h-[26px] pl-[3px] pr-[5px] gap-[8px]">
              <Grip />
              <Tool i="brush" t="删除" className="ml-[-5px]" />
              <Sep />
              <Tool i="copy" t="复制" />
              <Tool i="mirror" t="镜像" />
              <Sep />
              <Tool i="move" t="移动" />
              <Tool i="rotate" t="旋转" />
              <Sep />
              <Tool i="extend" t="延伸" />
              <Tool i="trim" t="修剪" />
              <Sep />
              <Tool i="break" t="打断" />
              <Tool i="merge" t="合并" className="ml-[-1px]" />
              <Tool i="split" t="分割" gray className="ml-[-3px]" />
              <Sep />
              <Tool i="align" t="对齐" caret />
              <Tool i="offset" t="偏移" className="ml-[-2px]" />
              <Tool i="stretch" t="拉伸" className="ml-[-1px]" />
              <Sep />
              <Tool i="grip" t="设置夹点" gray />
            </Seg>
          </div>
          {/* component toolbar */}
          <div className="h-[28px] flex items-center pl-[2px] shrink-0">
            <Seg className="h-[27px] w-[566px] pl-[6px] gap-[2px]">
              <Drop t="第6层" className="w-[59px]" />
              <Drop t="自定义" className="w-[69px]" />
              <Drop t="自定义线" className="w-[69px]" />
              <Drop t="ZDYX-13" className="w-[70px]" />
              <span className="w-px h-[18px] bg-[#c4c4c4] ml-[3px]" />
              <Tool i="prop" t="属性" className="ml-[5px]" />
              <Tool i="edit" t="编辑钢筋" className="h-[24px] ml-[2px] px-[2px] bg-[#dce8f5] border border-[#3a8cd8]" />
              <Tool i="list" t="构件列表" className="ml-[2px]" />
              <Tool i="pick" t="拾取构件" className="ml-[5px]" />
            </Seg>
            <Seg className="h-[27px] ml-[74px] pl-[3px] pr-[5px] gap-[7px]">
              <Grip />
              <Tool i="two" t="两点" className="ml-[-3px]" />
              <Tool i="para" t="平行" />
              <Tool i="angle" t="点角" caret />
              <Tool i="arc3" t="三点辅轴" caret />
              <Tool i="delAux" t="删除辅轴" />
              <Tool i="dim" t="尺寸标注" caret />
            </Seg>
          </div>
          {/* draw toolbar */}
          <div className="h-[29px] flex items-center pl-[2px] shrink-0">
            <Seg className="h-[28px] w-[494px] pl-[3px] gap-[8px]">
              <Grip />
              <div className="flex items-center h-[25px] w-[51px] ml-[-7px] pl-[5px] gap-[4px] bg-[#dce8f5] border border-[#3a8cd8]">
                <Icon n="cursor" className="w-[13px] h-[14px]" />
                <span>选择</span>
              </div>
              <Caret className="ml-[-4px]" />
              <Sep />
              <Tool i="line" t="直线" className="gap-[2px] ml-[-2px]" />
              <Tool i="plen" t="点加长度" />
              <Tool i="arc" t="三点画弧" caret className="ml-[-2px]" />
              <Drop t="" className="w-[56px] ml-[-3px]" />
              <Tool i="rect" t="矩形" className="ml-[-5px]" />
              <Sep />
              <Tool i="smart" t="智能布置" caret />
            </Seg>
          </div>

          <Viewport />

          {/* snap toolbar */}
          <div className="h-[29px] flex items-center pl-[2px] shrink-0">
            <Seg className="h-[27px] pl-[3px] pr-[1px] gap-[4px]">
              <Grip />
              <Tool i="ortho" t="正交" />
              <Tool i="snap" t="对象捕捉" className="h-[24px] px-[3px] bg-[#e4eef8] border border-[#3a8cd8]" />
              <Tool i="dyn" t="动态输入" className="ml-[-2px]" />
            </Seg>
            <Seg className="h-[27px] ml-[5px] pl-[3px] gap-[4px] w-[264px]">
              <Grip />
              <Tool i="cross" t="交点" className="ml-[2px]" />
              <Tool i="perp" t="垂点" className="h-[24px] w-[51px] px-[2px] bg-[#e4eef8] border border-[#3a8cd8]" />
              <Tool i="mid" t="中点" className="h-[24px] w-[51px] px-[2px] ml-[-4px] bg-[#e4eef8] border border-[#3a8cd8]" />
              <Tool i="vertex" t="顶点" />
              <Tool i="coord" t="坐标" className="ml-[2px]" />
            </Seg>
            <Seg className="h-[27px] pl-[10px] w-[407px]">
              <Drop t="不偏移" className="w-[57px]" />
              <span className="w-px h-[18px] bg-[#c4c4c4] ml-[4px]" />
              <span className="ml-[3px] w-[19px] text-[#888]">X=</span>
              <Num v="0" className="w-[57px]" />
              <span className="ml-[2px] w-[27px] text-[#888]">mm</span>
              <span className="w-[18px] text-[#888]">Y=</span>
              <Num v="0" className="w-[58px]" />
              <span className="ml-[2px] w-[26px] text-[#888]">mm</span>
              <span className="w-[10px] h-[10px] border border-[#888] bg-white ml-[4px]" />
              <span className="ml-[9px]">旋转</span>
              <Num v="0.000" className="w-[67px] ml-[5px]" />
              <span className="ml-[4px] text-[#888]">°</span>
            </Seg>
          </div>

          <GridPanel />
        </main>
      </div>

      {/* status bar */}
      <div className="h-[22px] flex items-center gap-[1px] shrink-0">
        <Status className="w-[149px]"><Mix s="X=126210 Y=8883" /></Status>
        <Status className="w-[79px]"><Mix s="层高:2.8m" /></Status>
        <Status className="w-[99px]"><Mix s="底标高:17.55m" /></Status>
        <Status className="w-[49px]"><Mix s="1(2)" /></Status>
        <Status className="w-[914px]"><Mix s="按鼠标左键指定第一个角点，或拾取构件图元" /></Status>
        <Status className="w-[71px]"><Mix s="486.6 FPS" /></Status>
      </div>

      <Taskbar />

      {/* sogou ime floating bar */}
      <div className="absolute left-[703px] top-0 flex items-start">
        <span className="w-[27px] h-[27px] rounded-[5px] bg-[#ee4a1e] text-white font-bold text-[24px] leading-[27px] text-center font-['Liberation_Sans',sans-serif]">S</span>
        <div className="ml-[-1px] mt-[3px] w-[179px] h-[24px] border border-[#a8c0dc] bg-white flex items-center pl-[4px] text-[#1a70c8]">
          <span className="text-[14px] font-bold">英</span>
          <span className="ml-[11px] text-[11px] font-bold w-[9px]">•,</span>
          <Smile size={17} className="ml-[10px]" />
          <Mic size={16} className="ml-[6px]" />
          <Keyboard size={17} className="ml-[5px]" />
          <svg viewBox="0 0 16 16" className="w-[16px] h-[16px] ml-[8px]"><circle cx="6" cy="4" r="3" fill="#aab4c0" /><path d="M1 14c0-6 10-6 10 0z" fill="#aab4c0" /><rect x="8" y="8" width="8" height="6" fill="#fff" stroke="#aab4c0" /></svg>
          <Shirt size={15} fill="#1a70c8" className="ml-[5px]" />
          <Wrench size={15} fill="#1a70c8" className="ml-[7px]" />
        </div>
      </div>

      {/* update badge */}
      <div className="absolute left-[1171px] top-[-27px] w-[46px] h-[46px] rounded-full bg-[#3dbb55] border-2 border-[#d8e8d8] shadow-[0_1px_3px_#888] flex items-end justify-center pb-[1px]">
        <span className="text-white text-[12px] font-bold font-['Liberation_Sans',sans-serif]">66</span>
      </div>
    </div>
  );
}
